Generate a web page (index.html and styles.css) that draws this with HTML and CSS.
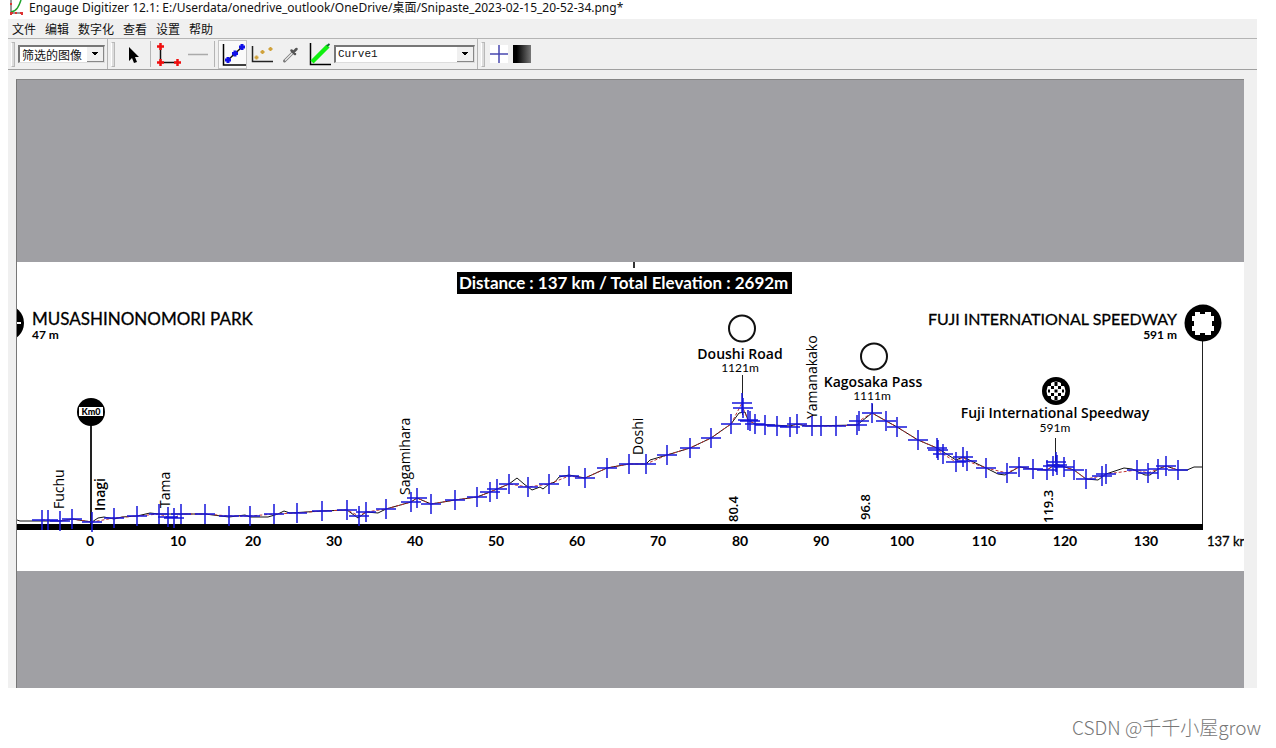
FILE: index.html
```html
<!DOCTYPE html>
<html lang="zh-CN">
<head>
<meta charset="utf-8">
<title>Engauge Digitizer 12.1</title>
<link rel="stylesheet" href="styles.css">
</head>
<body>
<div class="window">
  <header class="titlebar">
    <svg class="app-icon" width="16" height="16" viewBox="0 0 16 16" aria-hidden="true">
      <path d="M3 0v13h11" fill="none" stroke="#333"/>
      <path d="M3 12C9 11 11 6 13 0" fill="none" stroke="#1fa32c" stroke-width="1.5"/>
      <path d="M2 13h3M3 12v3M7 13h2M12 13h3M14 12v3M2 4h2" stroke="#d33" stroke-width="2"/>
    </svg>
    <h1 class="title">Engauge Digitizer 12.1: E:/Userdata/onedrive_outlook/OneDrive/桌面/Snipaste_2023-02-15_20-52-34.png*</h1>
  </header>
  <nav class="menubar">
    <button class="menu">文件</button>
    <button class="menu">编辑</button>
    <button class="menu">数字化</button>
    <button class="menu">查看</button>
    <button class="menu">设置</button>
    <button class="menu">帮助</button>
  </nav>
  <div class="toolbar">
    <div class="group">
      <span class="handle"></span>
      <label class="combo combo-view">
        <select aria-label="背景"><option>筛选的图像</option></select>
      </label>
    </div>
    <div class="group">
      <span class="handle"></span>
      <button class="tool tool-select" aria-label="Select">
        <svg viewBox="0 0 26 26"><path d="M9 6v14l3-3 2 5 3-1-2-5h4z" fill="#000"/></svg>
      </button>
      <span class="divider"></span>
      <button class="tool" aria-label="Axis point">
        <svg viewBox="0 0 26 26"><path d="M4.500 5.500v16h17" fill="none" stroke="#111" stroke-width="1.500"/><path d="M1 5.500h7M4.500 2v7M1 21.500h7M4.500 18v7M18 21.500h7M21.500 18v7" stroke="#f00e0e" stroke-width="2.500"/></svg>
      </button>
      <button class="tool" aria-label="Scale bar">
        <svg viewBox="0 0 26 26"><path d="M3 13.500h20" stroke="#aaa" stroke-width="1.500"/></svg>
      </button>
      <span class="divider"></span>
      <button class="tool tool-on" aria-label="Curve point">
        <svg viewBox="0 0 26 26"><path d="M3.500 3v21H26" fill="none" stroke="#000" stroke-width="1.500"/><path d="M8 19L22 6" stroke="#111" stroke-width="1.500"/><path d="M5 19h6M8 16v6M12 12.500h6M15 9.500v6M19 6h6M22 3v6" stroke="#1010e8" stroke-width="3"/></svg>
      </button>
      <button class="tool" aria-label="Point match">
        <svg viewBox="0 0 26 26"><path d="M3.500 5v15.500H24" fill="none" stroke="#222" stroke-width="1.500"/><path d="M5.500 16.500h4M7.500 14.500v4M11.500 11h4M13.500 9v4M19.500 8h4M21.500 6v4" stroke="#d0a23c" stroke-width="2"/></svg>
      </button>
      <button class="tool" aria-label="Color picker">
        <svg viewBox="0 0 26 26"><path d="M6.500 20L15 11.500" stroke="#777" stroke-width="3" stroke-linecap="round"/><path d="M7 19.500l8-8" stroke="#e8e8e8" stroke-width="1.500"/><path d="M13.500 9.500l3.500 3.500M15.500 11L18.500 8" stroke="#555" stroke-width="2.500" stroke-linecap="round"/></svg>
      </button>
      <button class="tool" aria-label="Segment fill">
        <svg viewBox="0 0 26 26"><path d="M3.500 2v21.500H24" fill="none" stroke="#000" stroke-width="1.500"/><path d="M5 21L21 5" stroke="#10f010" stroke-width="4.500"/><path d="M20 5l2.500-2" stroke="#163" stroke-width="2"/></svg>
      </button>
      <label class="combo combo-curve">
        <select aria-label="Curve"><option>Curve1</option></select>
      </label>
    </div>
    <div class="group group-last">
      <span class="handle"></span>
      <button class="mini" aria-label="Point style">
        <svg viewBox="0 0 18 18"><rect width="18" height="18" fill="#fff"/><path d="M0 9h18M9 0v18" stroke="#4848b0" stroke-width="1.500"/></svg>
      </button>
      <button class="mini" aria-label="Filter">
        <svg viewBox="0 0 18 18"><defs><linearGradient id="shade"><stop offset="0.200" stop-color="#000"/><stop offset="1" stop-color="#777"/></linearGradient></defs><rect width="18" height="18" fill="url(#shade)"/></svg>
      </button>
    </div>
  </div>
  <main class="workspace">
    <div class="canvas">
      <svg class="chart" viewBox="17 262 1227 309" role="img" aria-label="Elevation profile">
        <path d="M634 262v6" stroke="#333" stroke-width="2"/>
        <rect x="457" y="272" width="335" height="22"/>
        <text class="banner" x="459" y="289">Distance : 137 km / Total Elevation : 2692m</text>

        <circle cx="6" cy="323" r="18"/>
        <path d="M17 323h4" stroke="#fff" stroke-width="2"/>
        <text class="place" x="32" y="325">MUSASHINONOMORI PARK</text>
        <text class="height" x="32" y="339">47 m</text>
        <text class="place finish end" x="1177" y="325">FUJI INTERNATIONAL SPEEDWAY</text>
        <text class="height end" x="1177" y="339">591 m</text>

        <path class="pole" d="M1202.500 340v186"/>
        <circle cx="1203" cy="323" r="18.500"/>
        <path d="M1195 312h5v2h5v-2h6v4h3v5h-2v5h2v5h-3v4h-6v-2h-5v2h-5v-4h-3v-5h2v-5h-2v-5h3z" fill="#fff"/>

        <circle class="ring" cx="742" cy="328.500" r="13"/>
        <text class="label mid" x="740" y="359">Doushi Road</text>
        <text class="sub mid" x="740" y="372">1121m</text>
        <path class="pole" d="M742.500 375v40"/>
        <circle class="ring" cx="874" cy="356.500" r="13"/>
        <text class="label mid" x="873" y="387">Kagosaka Pass</text>
        <text class="sub mid" x="872" y="400">1111m</text>
        <path class="pole" d="M872.500 404v10"/>

        <circle cx="1056" cy="391" r="14"/>
        <circle cx="1056" cy="391" r="9.500" fill="#fff"/>
        <path d="M1048 391h2M1062 391h2M1056 382v2M1056 398v2M1051 387.500h3M1058 387.500h3M1054.500 391h3M1051 394.500h3M1058 394.500h3M1054.500 384.500h3M1054.500 397.500h3M1048 384.500h3M1061 384.500h3M1048 397.500h3M1061 397.500h3" stroke="#000" stroke-width="3"/>
        <text class="label mid" x="1055" y="418">Fuji International Speedway</text>
        <text class="sub mid" x="1055" y="432">591m</text>
        <path class="pole" d="M1055.500 438v24"/>

        <path d="M91 412v112" stroke="#222" stroke-width="2"/>
        <circle cx="91" cy="412" r="14"/>
        <rect x="79" y="407" width="24" height="9" fill="#fff"/>
        <text class="km mid" x="91" y="415">Km0</text>

        <text class="town" transform="translate(64 509) rotate(-90)">Fuchu</text>
        <text class="town bold" transform="translate(105 511) rotate(-90)">Inagi</text>
        <text class="town" transform="translate(170 508) rotate(-90)">Tama</text>
        <text class="town" transform="translate(410 495) rotate(-90)">Sagamihara</text>
        <text class="town" transform="translate(643 455) rotate(-90)">Doshi</text>
        <text class="town" transform="translate(817 419) rotate(-90)">Yamanakako</text>
        <text class="town bold small" transform="translate(738 522) rotate(-90)">80.4</text>
        <text class="town small" transform="translate(870 520) rotate(-90)">96.8</text>
        <text class="town bold small" transform="translate(1053 523) rotate(-90)">119.3</text>

        <rect x="17" y="524" width="1186" height="6"/>
        <g id="ticks"></g>
        <text class="total" x="1207" y="546">137 kr</text>

        <path class="trace" d="M17 520L20 521L42 521L60 521L72 519L92 522L98 518L104 517L114 519L122 517L137 516L150 513L159 514L205 514L229 517L245 515L250 517L268 517L278 514L284 511L290 513L322 511L347 510L358 518L366 512L378 513L386 509L411 502L417 498L431 504L455 500L477 497L490 492L509 484L517 478L524 484L532 490L540 487L543 489L549 484L555 482L559 477L569 475L585 478L607 468L629 464L646 464L650 460L667 455L690 448L711 438L731 424L739 413L745 412L748 420L755 424L790 426L797 424L806 426L857 425L872 413L897 427L918 440L937 448L956 460L963 457L986 468L998 474L1005 475L1019 467L1033 469L1047 470L1056 464L1074 470L1086 479L1098 480L1106 474L1124 468L1132 469L1145 475L1150 475L1158 469L1166 466L1178 470L1187 470L1194 467L1202 467"/>
        <path id="fit" class="fit"/>
        <path id="marks" class="marks"/>
      </svg>
    </div>
  </main>
</div>
<footer class="credit">CSDN @千千小屋grow</footer>
<script src="chart.js"></script>
</body>
</html>
```

FILE: styles.css
```css
* { box-sizing: border-box; }
body {
  margin: 0;
  min-height: 100vh;
  display: flex;
  flex-direction: column;
  background: #fff;
  color: #111;
  font-family: "Open Sans", "Noto Sans CJK SC", sans-serif;
}
button { border: 0; padding: 0; background: none; font: inherit; color: inherit; }
svg { display: block; }

.window {
  flex: 1;
  display: flex;
  flex-direction: column;
  margin: 0 19px 0 8px;
  background: #f0f0f0;
}
.titlebar {
  display: flex;
  gap: 5px;
  height: 19px;
  background: #fff;
}
.title {
  margin: 0;
  font: 400 12px/15px "Noto Sans", "Noto Sans CJK SC", sans-serif;
  white-space: nowrap;
}
.menubar {
  display: flex;
  gap: 9px;
  height: 20px;
  padding-left: 4px;
  border-bottom: 1px solid #b4b4b4;
}
.menu { font-size: 12px; line-height: 18px; font-family: "Noto Sans CJK SC", sans-serif; }

.toolbar {
  display: flex;
  height: 31px;
  border-bottom: 1px solid #a0a0a0;
}
.group {
  display: flex;
  align-items: center;
  padding: 0 2px 0 3px;
  border-right: 1px solid #b4b4b4;
}
.group-last { border: 0; gap: 5px; }
.handle {
  width: 4px;
  height: 25px;
  margin-right: 3px;
  border: 1px solid #b8b8b8;
  border-left-color: #fff;
  background: #dcdcdc;
}
.divider { width: 1px; height: 26px; margin: 0 3px 0 2px; background: #b4b4b4; }
.tool { width: 29px; height: 29px; display: grid; place-items: center; }
.tool svg { width: 26px; height: 26px; }
.tool-select { margin-right: 1px; }
.tool-on { background: #fafafa; border: 1px solid #c4c4c4; }
.mini svg { width: 18px; height: 18px; }
.group-last .handle { margin-right: 0; }

.combo {
  position: relative;
  height: 18px;
  border: 1px solid #ddd;
  border-top: 2px solid #777;
  border-left: 2px solid #777;
  background: #fff;
}
.combo select {
  display: block;
  width: 100%;
  height: 15px;
  padding: 0 2px;
  border: 0;
  appearance: none;
  background: transparent;
  color: #111;
  font: 12px/15px "Noto Sans CJK SC", sans-serif;
}
.combo::after {
  content: "";
  position: absolute;
  right: 0;
  top: 0;
  width: 16px;
  height: 14px;
  border: solid #888;
  border-width: 0 1px 1px 0;
  background: linear-gradient(#000, #000) 5px 5px / 6px 1px no-repeat,
    linear-gradient(#000, #000) 6px 6px / 4px 1px no-repeat,
    linear-gradient(#000, #000) 7px 7px / 2px 1px no-repeat, #f0f0f0;
  pointer-events: none;
}
.combo-view { width: 87px; }
.combo-curve { width: 141px; }
.combo-curve select { font-family: "Liberation Mono", monospace; font-size: 11px; }

.workspace { flex: 1; display: flex; padding: 9px 13px 0 8px; }
.canvas {
  flex: 1;
  padding: 182px 0 116px;
  border-top: 1px solid #858585;
  border-left: 1px solid #777;
  background: #a0a0a4;
}

.chart { width: 100%; background: #fff; font-family: Lato, sans-serif; }
.chart text { fill: #000; }
.chart .banner { fill: #fff; font-size: 17px; font-weight: 700; }
.place { font-size: 17px; stroke: #000; stroke-width: 0.3px; }
.finish { font-size: 16px; }
.height { font-size: 12px; font-weight: 700; }
.label { font: 600 14px "Open Sans", sans-serif; }
.sub { font-size: 12px; }
.town { font: 500 14px "Open Sans", sans-serif; }
.town.bold { font-weight: 600; }
.town.small { font-size: 13px; font-weight: 600; }
.km { font-size: 9px; font-weight: 900; }
.tick { font-size: 14px; font-weight: 700; }
.total { font-size: 13px; stroke: #000; stroke-width: 0.3px; }
.mid { text-anchor: middle; }
.end { text-anchor: end; }
.pole { stroke: #222; }
.ring { fill: #fff; stroke: #111; stroke-width: 2; }
.trace { fill: none; stroke: #111; stroke-width: 1; }
.fit { fill: none; stroke: #c03030; stroke-width: 1; stroke-dasharray: 3 2; }
.marks { fill: none; stroke: #1616dc; stroke-width: 1.5; }

.credit {
  height: 60px;
  padding: 26px 15px 0 0;
  text-align: right;
  color: #777;
  font: 300 19px/26px "Noto Sans CJK SC", sans-serif;
}
```

FILE: chart.js
```js
const points = [
  [42, 520], [48, 520], [60, 521], [72, 519], [92, 522], [114, 518], [137, 516],
  [159, 514], [168, 517], [174, 518], [181, 514], [205, 514], [229, 516], [250, 516],
  [274, 514], [297, 513], [322, 511], [347, 510], [359, 516], [366, 512], [386, 509],
  [411, 502], [417, 498], [431, 504], [455, 500], [477, 497], [490, 492], [497, 489],
  [509, 484], [528, 487], [549, 484], [569, 476], [585, 478], [607, 468], [629, 464],
  [646, 464], [667, 455], [690, 448], [711, 438], [731, 424], [742, 403], [743, 408],
  [748, 420], [750, 421], [755, 424], [765, 425], [777, 426], [790, 427], [797, 424],
  [812, 426], [821, 426], [836, 426], [857, 425], [859, 421], [872, 413], [886, 421],
  [897, 427], [918, 440], [937, 448], [938, 450], [943, 454], [956, 462], [963, 457],
  [967, 461], [986, 468], [1007, 473], [1019, 467], [1033, 469], [1047, 470],
  [1053, 466], [1056, 462], [1057, 465], [1064, 467], [1074, 470], [1086, 479],
  [1102, 476], [1106, 474], [1137, 470], [1148, 473], [1158, 469], [1166, 466], [1178, 470]
];
document.getElementById("marks").setAttribute("d",
  points.map(([x, y]) => `M${x - 10} ${y}h20M${x} ${y - 10}v20`).join(""));
document.getElementById("fit").setAttribute("d",
  "M" + points.map((p) => p.join(" ")).join("L"));

const ticks = [90, 178, 253, 334, 415, 496, 577, 658, 740, 821, 902, 984, 1065, 1146];
document.getElementById("ticks").innerHTML = ticks
  .map((x, i) => `<text class="tick mid" x="${x}" y="546">${i * 10}</text>`)
  .join("");
```
